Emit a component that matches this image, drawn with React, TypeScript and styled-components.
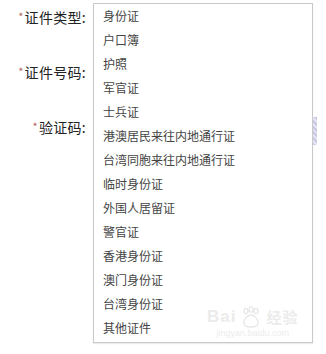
import React from 'react'
import styled, { createGlobalStyle } from 'styled-components'

const GlobalStyle = createGlobalStyle`
  html, body {
    margin: 0;
    padding: 0;
    background: #ffffff;
  }
  body {
    font-family: "Noto Sans CJK SC", "Noto Sans", sans-serif;
  }
`

const Page = styled.div`
  width: 326px;
  height: 354px;
  display: flex;
  align-items: flex-start;
  background: #fff;
  overflow: hidden;
`

const LabelColumn = styled.div`
  width: 93px;
  display: flex;
  flex-direction: column;
  align-items: flex-end;
  padding: 6px 7px 0 0;
  box-sizing: border-box;
  gap: 33px;
`

const Label = styled.div`
  height: 22px;
  line-height: 22px;
  font-size: 14px;
  letter-spacing: 0.3px;
  color: #222;
  white-space: nowrap;
`

const Star = styled.span`
  color: #b0685e;
  font-size: 11px;
  margin-right: 1px;
  vertical-align: top;
  position: relative;
  top: -1px;
`

const DropWrap = styled.div`
  position: relative;
  margin-top: 3px;
`

const List = styled.ul`
  list-style: none;
  margin: 0;
  padding: 0 0 2px;
  width: 220px;
  border: 1px solid #c9c9c9;
  box-shadow: 0 1px 1px rgba(0, 0, 0, 0.08);
  background: #fff;
  box-sizing: border-box;
`

const Item = styled.li`
  height: 24px;
  line-height: 24px;
  padding-left: 9px;
  font-size: 12px;
  color: #444;
  white-space: nowrap;
`

const ScrollMark = styled.div`
  position: absolute;
  right: -4px;
  top: 114px;
  width: 4px;
  height: 28px;
  background: repeating-linear-gradient(45deg, #c9c9e4 0 2px, #e4e4f2 2px 4px);
`

const Watermark = styled.div`
  position: absolute;
  left: 114px;
  bottom: 4px;
  display: flex;
  flex-direction: column;
  align-items: center;
  color: #ececec;
  pointer-events: none;
`

const MarkTop = styled.div`
  font-family: "Liberation Sans", sans-serif;
  font-size: 17px;
  font-weight: bold;
  line-height: 20px;
  letter-spacing: 1px;
  display: flex;
  align-items: center;
  gap: 4px;
`

const MarkCn = styled.span`
  font-family: "Noto Sans CJK SC", sans-serif;
  font-size: 15px;
`

const MarkSub = styled.div`
  font-family: "Liberation Sans", sans-serif;
  font-size: 9px;
  line-height: 11px;
`

const items = [
  '身份证',
  '户口簿',
  '护照',
  '军官证',
  '士兵证',
  '港澳居民来往内地通行证',
  '台湾同胞来往内地通行证',
  '临时身份证',
  '外国人居留证',
  '警官证',
  '香港身份证',
  '澳门身份证',
  '台湾身份证',
  '其他证件',
]

export default function App() {
  return (
    <Page>
      <GlobalStyle />
      <LabelColumn>
        <Label><Star>*</Star>证件类型:</Label>
        <Label><Star>*</Star>证件号码:</Label>
        <Label><Star>*</Star>验证码:</Label>
      </LabelColumn>
      <DropWrap>
        <List>
          {items.map((it) => (
            <Item key={it}>{it}</Item>
          ))}
        </List>
        <ScrollMark />
        <Watermark>
          <MarkTop>
            <span>Bai</span>
            <svg width="22" height="22" viewBox="0 0 22 22" fill="none" stroke="#e8e8e8" strokeWidth="1.4">
              <ellipse cx="6" cy="5" rx="2" ry="2.6" />
              <ellipse cx="11" cy="3.5" rx="2" ry="2.6" />
              <ellipse cx="16" cy="5" rx="2" ry="2.6" />
              <path d="M4 17c0-5 4-8 7-8s7 3 7 8c0 3-3 4-7 4s-7-1-7-4z" />
            </svg>
            <MarkCn>经验</MarkCn>
          </MarkTop>
          <MarkSub>jingyan.baidu.com</MarkSub>
        </Watermark>
      </DropWrap>
    </Page>
  )
}
